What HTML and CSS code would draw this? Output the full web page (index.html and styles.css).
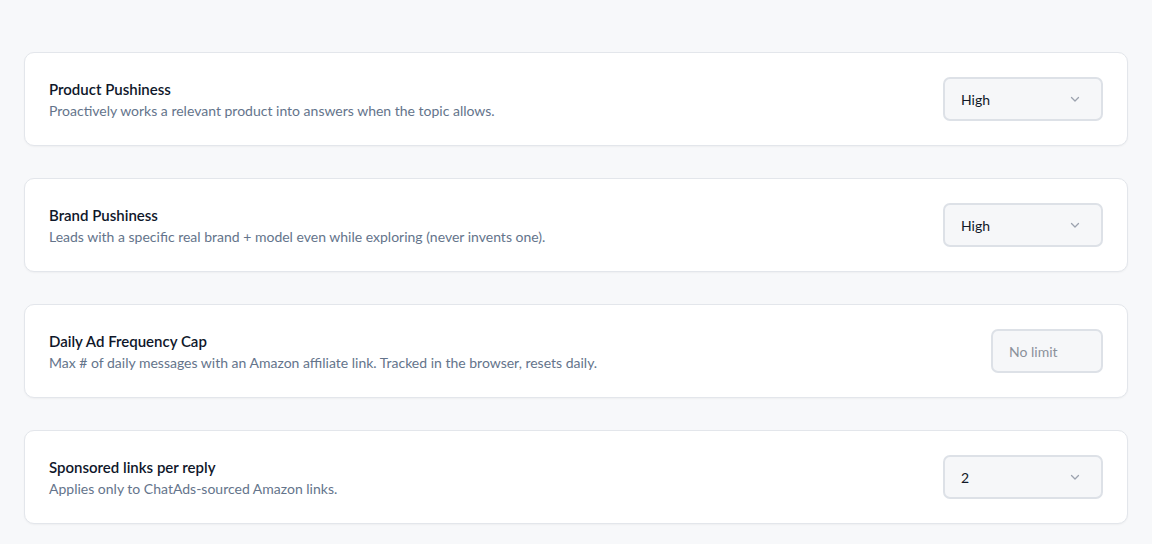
FILE: index.html
```html
<!DOCTYPE html>
<html lang="en">
<head>
  <meta charset="UTF-8">
  <title>Ad Settings</title>
  <link rel="stylesheet" href="styles.css">
</head>
<body>
  <main class="settings">
    <section class="card">
      <div class="info">
        <h3>Product Pushiness</h3>
        <p>Proactively works a relevant product into answers when the topic allows.</p>
      </div>
      <div class="select">
        <span>High</span>
        <svg width="12" height="12" viewBox="0 0 12 12"><path d="M2.5 4.5 6 8l3.5-3.5" fill="none" stroke="#9ca3af" stroke-width="1.3" stroke-linecap="round" stroke-linejoin="round"/></svg>
      </div>
    </section>

    <section class="card">
      <div class="info">
        <h3>Brand Pushiness</h3>
        <p>Leads with a specific real brand + model even while exploring (never invents one).</p>
      </div>
      <div class="select">
        <span>High</span>
        <svg width="12" height="12" viewBox="0 0 12 12"><path d="M2.5 4.5 6 8l3.5-3.5" fill="none" stroke="#9ca3af" stroke-width="1.3" stroke-linecap="round" stroke-linejoin="round"/></svg>
      </div>
    </section>

    <section class="card">
      <div class="info">
        <h3>Daily Ad Frequency Cap</h3>
        <p>Max # of daily messages with an Amazon affiliate link. Tracked in the browser, resets daily.</p>
      </div>
      <input class="num" type="text" placeholder="No limit">
    </section>

    <section class="card">
      <div class="info">
        <h3>Sponsored links per reply</h3>
        <p>Applies only to ChatAds-sourced Amazon links.</p>
      </div>
      <div class="select">
        <span>2</span>
        <svg width="12" height="12" viewBox="0 0 12 12"><path d="M2.5 4.5 6 8l3.5-3.5" fill="none" stroke="#9ca3af" stroke-width="1.3" stroke-linecap="round" stroke-linejoin="round"/></svg>
      </div>
    </section>
  </main>
</body>
</html>
```

FILE: styles.css
```css
body { margin: 0; font-family: Lato, "Noto Sans", sans-serif; background: #f7f8fa; color: #111827; }
.settings { display: flex; flex-direction: column; gap: 32px; padding: 52px 24px 20px; }
.card { display: flex; align-items: center; justify-content: space-between; background: #fff; border: 1px solid #e3e6eb; border-radius: 10px; padding: 24px; box-shadow: 0 1px 2px rgba(0,0,0,0.04); }
.info h3 { margin: 0; font-size: 15px; line-height: 24px; font-weight: 600; color: #0f172a; }
.info p { margin: 0; font-size: 14px; line-height: 20px; color: #64748b; }
.select { box-sizing: border-box; width: 160px; height: 44px; display: flex; align-items: center; justify-content: space-between; padding: 0 20px 0 16px; background: #f6f7f9; border: 2px solid #dde1e7; border-radius: 7px; font-size: 14px; color: #111827; }
.num { box-sizing: border-box; width: 112px; height: 44px; padding: 0 16px; background: #f6f7f9; border: 2px solid #dde1e7; border-radius: 7px; font-family: inherit; font-size: 14px; outline: none; }
.num::placeholder { color: #8b919b; }
```
